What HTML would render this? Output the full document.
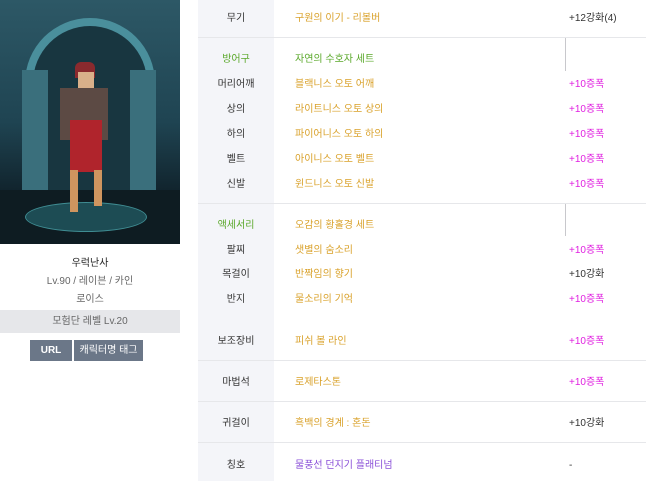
<!DOCTYPE html>
<html><head><meta charset="utf-8"><style>
*{margin:0;padding:0;box-sizing:border-box}
body{width:646px;height:481px;background:#fff;position:relative;overflow:hidden;font-family:"Liberation Sans","Noto Sans CJK KR",sans-serif;font-size:10px;color:#333}
.a{position:absolute;white-space:nowrap;line-height:12px}
.r{position:absolute;left:0;top:2px;width:646px;height:481px}
.lab{left:198px;width:76px;text-align:center}
.it{left:295px;color:#d9a12a}
.v{left:569px}
.m{color:#e020e0}
.g{color:#5aa82a}
.hr{position:absolute;left:198px;width:448px;height:1px;background:#e6e7ea}
.vl{position:absolute;left:565px;width:1px;background:#c8c8cc}
</style></head><body>
<div style="position:absolute;left:0;top:0;width:180px;height:244px;background:linear-gradient(#2d5866,#1f4452 50%,#10222b 80%,#0b151b);overflow:hidden">
 <div style="position:absolute;left:25px;top:18px;width:130px;height:180px;border-radius:65px 65px 0 0;border:8px solid #4a8f9c;border-bottom:none;background:#183640"></div>
 <div style="position:absolute;left:22px;top:70px;width:26px;height:120px;background:#3a6f7c"></div>
 <div style="position:absolute;left:130px;top:70px;width:26px;height:120px;background:#3a6f7c"></div>
 <div style="position:absolute;left:0;top:190px;width:180px;height:54px;background:#0e1c22"></div>
 <div style="position:absolute;left:25px;top:202px;width:122px;height:30px;border-radius:50%;background:#1d4c54;border:1px solid #3f8c92"></div>
 <div style="position:absolute;left:75px;top:62px;width:20px;height:16px;background:#8a2a2e;border-radius:6px 6px 0 0"></div>
 <div style="position:absolute;left:78px;top:72px;width:16px;height:20px;background:#d9b08a"></div>
 <div style="position:absolute;left:60px;top:88px;width:48px;height:52px;background:#5c4a44"></div>
 <div style="position:absolute;left:70px;top:120px;width:32px;height:52px;background:#b0242c"></div>
 <div style="position:absolute;left:70px;top:170px;width:8px;height:42px;background:#cf955f"></div>
 <div style="position:absolute;left:94px;top:170px;width:8px;height:36px;background:#cf955f"></div>
</div>
<div class="a" style="left:0;width:180px;text-align:center;top:258px;color:#222">우럭난사</div>
<div class="a" style="left:0;width:180px;text-align:center;top:276px;color:#666">Lv.90 / 레이븐 / 카인</div>
<div class="a" style="left:0;width:180px;text-align:center;top:294px;color:#666">로이스</div>
<div style="position:absolute;left:0;top:310px;width:180px;height:23px;background:#e6e7ea"></div>
<div class="a" style="left:0;width:180px;text-align:center;top:316px;color:#666">모험단 레벨 Lv.20</div>
<div style="position:absolute;left:30px;top:340px;width:42px;height:21px;background:#6b7788;color:#fff;font-weight:bold;text-align:center;line-height:21px">URL</div>
<div style="position:absolute;left:74px;top:340px;width:69px;height:21px;background:#6b7788;color:#fff;text-align:center;line-height:21px">캐릭터명 태그</div>

<div style="position:absolute;left:198px;top:0;width:76px;height:481px;background:#f4f5f9"></div>
<div class="hr" style="top:37px"></div>
<div class="hr" style="top:203px"></div>
<div class="hr" style="top:360px"></div>
<div class="hr" style="top:401px"></div>
<div class="hr" style="top:442px"></div>
<div class="vl" style="top:38px;height:33px"></div>
<div class="vl" style="top:204px;height:32px"></div>
<div class="r">
<div class="a lab" style="top:11px">무기</div><div class="a it" style="top:11px">구원의 이기 - 리볼버</div><div class="a v" style="top:11px">+12강화(4)</div>
<div class="a lab g" style="top:52px">방어구</div><div class="a it g" style="top:52px">자연의 수호자 세트</div>
<div class="a lab" style="top:77px">머리어깨</div><div class="a it" style="top:77px">블랙니스 오토 어깨</div><div class="a v m" style="top:77px">+10증폭</div>
<div class="a lab" style="top:102px">상의</div><div class="a it" style="top:102px">라이트니스 오토 상의</div><div class="a v m" style="top:102px">+10증폭</div>
<div class="a lab" style="top:127px">하의</div><div class="a it" style="top:127px">파이어니스 오토 하의</div><div class="a v m" style="top:127px">+10증폭</div>
<div class="a lab" style="top:152px">벨트</div><div class="a it" style="top:152px">아이니스 오토 벨트</div><div class="a v m" style="top:152px">+10증폭</div>
<div class="a lab" style="top:177px">신발</div><div class="a it" style="top:177px">윈드니스 오토 신발</div><div class="a v m" style="top:177px">+10증폭</div>
<div class="a lab g" style="top:218px">액세서리</div><div class="a it" style="top:218px">오감의 황홀경 세트</div>
<div class="a lab" style="top:243px">팔찌</div><div class="a it" style="top:243px">샛별의 숨소리</div><div class="a v m" style="top:243px">+10증폭</div>
<div class="a lab" style="top:267px">목걸이</div><div class="a it" style="top:267px">반짝임의 향기</div><div class="a v" style="top:267px">+10강화</div>
<div class="a lab" style="top:292px">반지</div><div class="a it" style="top:292px">물소리의 기억</div><div class="a v m" style="top:292px">+10증폭</div>
<div class="a lab" style="top:334px">보조장비</div><div class="a it" style="top:334px">피쉬 볼 라인</div><div class="a v m" style="top:334px">+10증폭</div>
<div class="a lab" style="top:375px">마법석</div><div class="a it" style="top:375px">로제타스톤</div><div class="a v m" style="top:375px">+10증폭</div>
<div class="a lab" style="top:416px">귀걸이</div><div class="a it" style="top:416px">흑백의 경계 : 혼돈</div><div class="a v" style="top:416px">+10강화</div>
<div class="a lab" style="top:458px">칭호</div><div class="a it" style="top:458px;color:#8a4fd8">물풍선 던지기 플래티넘</div><div class="a v" style="top:458px">-</div>
</div>
</body></html>
